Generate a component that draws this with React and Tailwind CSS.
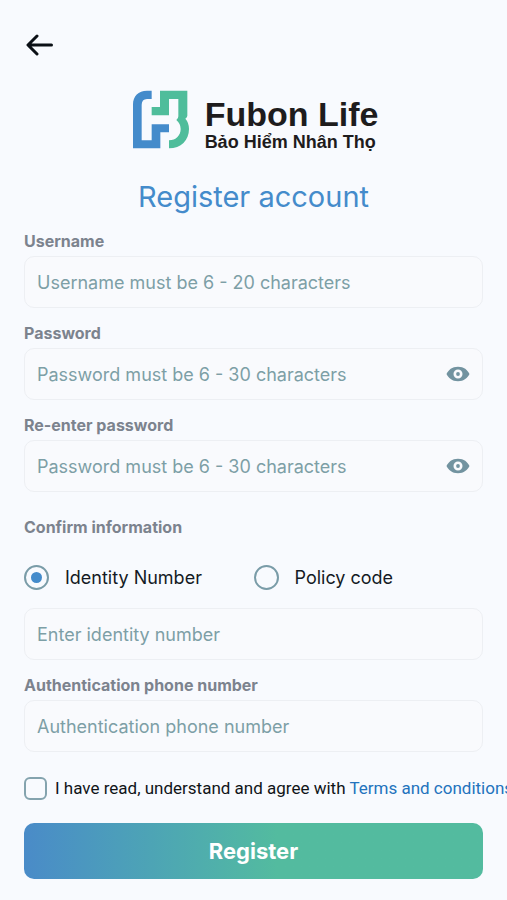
import React, { useState } from 'react';

const BackArrow = () => (
    <svg viewBox="0 0 28 24" className="w-7 h-6" fill="none" stroke="#0b1016" strokeWidth="3" strokeLinecap="round" strokeLinejoin="round" aria-hidden="true">
        <path d="M25.500 12H2.500M11 3L2 12l9 9" />
    </svg>
);

const LogoMark = () => (
    <svg viewBox="24 18 168 175" className="w-14 h-[59px]" aria-hidden="true">
        <path fill="#448bcb" d="M80 19H66C40 19 24 36 24 60V192H106V144H132V120H80V168H50V62Q50 44 66 44H80Z" />
        <path fill="#4fbd9b" d="M105 19H187V94Q187 99 181 103Q192 115 192 134C192 168 168 192 132 192V168C153 168 167 153 167 134Q167 118 154 107Q160 103 160 96V44H132V93H80V68H105Z" />
    </svg>
);

const EyeIcon = () => (
    <svg viewBox="0 0 24 16" className="w-6 h-4" aria-hidden="true">
        <path fill="#7293a0" fillRule="evenodd" d="M12 .8C6 .8 2.500 4 .5 8c2 4 5.500 7.200 11.500 7.200S21.500 12 23.500 8C21.500 4 18 .8 12 .8zm0 11.700a4.500 4.500 0 1 1 0-9 4.500 4.500 0 0 1 0 9z" />
        <circle cx="12" cy="8" r="1.900" fill="#7293a0" />
    </svg>
);

const inputClass =
    'w-full h-13 px-3 rounded-[10px] border border-[#edeff3] bg-[#f9fafd] text-lg text-[#101820] placeholder:text-[#7d9fa6] outline-none focus:border-[#448bcb]';

const labelClass = 'text-base leading-5 font-bold text-[#7c838e]';

const Field = ({ id, label, placeholder, type = 'text' }) => (
    <div className="flex flex-col gap-[5px]">
        <label htmlFor={id} className={labelClass}>
            {label}
        </label>
        <input id={id} type={type} placeholder={placeholder} className={inputClass} />
    </div>
);

const PasswordField = ({ id, label, placeholder }) => {
    const [visible, setVisible] = useState(false);

    return (
        <div className="flex flex-col gap-[5px]">
            <label htmlFor={id} className={labelClass}>
                {label}
            </label>
            <div className="relative">
                <input id={id} type={visible ? 'text' : 'password'} placeholder={placeholder} className={`${inputClass} pr-12`} />
                <button
                    type="button"
                    aria-label={visible ? 'Hide password' : 'Show password'}
                    onClick={() => setVisible(!visible)}
                    className="absolute inset-y-0 right-[13px] flex items-center"
                >
                    <EyeIcon />
                </button>
            </div>
        </div>
    );
};

const RadioOption = ({ label, value, selected, onSelect }) => (
    <label className="flex-1 flex items-center gap-4 text-lg leading-6 text-[#141a24]">
        <input
            type="radio"
            name="confirmBy"
            value={value}
            checked={selected === value}
            onChange={() => onSelect(value)}
            className="appearance-none shrink-0 grid place-content-center w-[25px] h-[25px] rounded-full border-2 border-[#7a9ca8] before:w-[11px] before:h-[11px] before:rounded-full checked:before:bg-[#448bcb]"
        />
        {label}
    </label>
);

const App = () => {
    const [confirmBy, setConfirmBy] = useState('identity');

    return (
        <div className="min-h-screen overflow-x-hidden bg-[#f8fafe] px-6 pt-8 pb-5 font-[Inter,sans-serif]">
            <button type="button" aria-label="Back" className="flex items-center h-6 ml-0.5 mt-px">
                <BackArrow />
            </button>

            <div className="flex justify-center items-start gap-4 mt-[33px] pl-1 text-[#1e1c1d] font-['Liberation_Sans',Arial,sans-serif] font-bold">
                <LogoMark />
                <div className="flex flex-col pt-2 whitespace-nowrap">
                    <span className="text-[34px] leading-8">Fubon Life</span>
                    <span className="text-lg leading-6">Bảo Hiểm Nhân Thọ</span>
                </div>
            </div>

            <h1 className="mt-[23px] text-center text-[29px] leading-10 text-[#448bcb]">Register account</h1>

            <form className="mt-[14px]" onSubmit={(e) => e.preventDefault()}>
                <div className="flex flex-col gap-[15px]">
                    <Field id="username" label="Username" placeholder="Username must be 6 - 20 characters" />
                    <PasswordField id="password" label="Password" placeholder="Password must be 6 - 30 characters" />
                    <PasswordField id="repassword" label="Re-enter password" placeholder="Password must be 6 - 30 characters" />
                </div>

                <fieldset className="mt-[25px]">
                    <legend className={labelClass}>Confirm information</legend>
                    <div className="flex mt-7">
                        <RadioOption label="Identity Number" value="identity" selected={confirmBy} onSelect={setConfirmBy} />
                        <RadioOption label="Policy code" value="policy" selected={confirmBy} onSelect={setConfirmBy} />
                    </div>
                    <input
                        type="text"
                        aria-label="Identity number"
                        placeholder={confirmBy === 'identity' ? 'Enter identity number' : 'Enter policy code'}
                        className={`${inputClass} mt-[18px]`}
                    />
                </fieldset>

                <div className="mt-[15px]">
                    <Field id="phone" type="tel" label="Authentication phone number" placeholder="Authentication phone number" />
                </div>

                <div className="flex items-center gap-2 mt-6 text-[17px] leading-6 whitespace-nowrap text-[#101418] font-[Roboto,sans-serif]">
                    <input
                        id="agree"
                        type="checkbox"
                        className="appearance-none shrink-0 w-[23px] h-[23px] rounded-md border-2 border-[#84a3ae] checked:bg-[#448bcb]"
                    />
                    <label htmlFor="agree">
                        I have read, understand and agree with{' '}
                        <a href="#terms" className="text-[#2373bd]">Terms and conditions</a>
                    </label>
                </div>

                <button
                    type="submit"
                    className="w-full h-14 mt-[23px] rounded-[10px] bg-linear-to-r from-[#4a8bc8] to-[#53bb9f] to-55% text-white text-[22px] font-bold"
                >
                    Register
                </button>
            </form>
        </div>
    );
};

export default App;
